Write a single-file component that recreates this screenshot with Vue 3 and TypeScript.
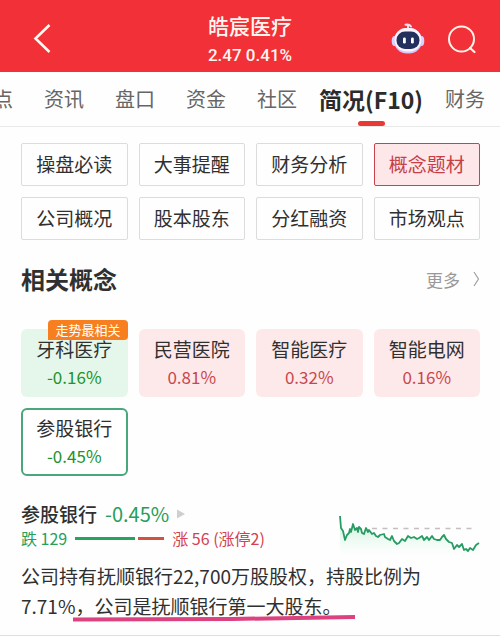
<script setup lang="ts">
import { ref } from 'vue'

interface Concept {
  name: string
  change: string
  tag?: string
}

const tabs: string[] = ['热点', '资讯', '盘口', '资金', '社区', '简况(F10)', '财务']
const activeTab = ref('简况(F10)')

const sections: string[] = [
  '操盘必读', '大事提醒', '财务分析', '概念题材',
  '公司概况', '股本股东', '分红融资', '市场观点',
]
const activeSection = ref('概念题材')

const concepts: Concept[] = [
  { name: '牙科医疗', change: '-0.16%', tag: '走势最相关' },
  { name: '民营医院', change: '0.81%' },
  { name: '智能医疗', change: '0.32%' },
  { name: '智能电网', change: '0.16%' },
  { name: '参股银行', change: '-0.45%' },
]
const activeConcept = ref('参股银行')

const trend =
  '1,2 2,14 4,17 6,26 8,21 10,19 11,15 12,18 14,10 16,16 18,14 19,18 20,13 22,15 23,19 25,20 27,14 29,18 30,16 33,20 35,19 37,22 39,23 41,21 45,20 46,23 49,25 51,26 53,22 55,27 58,30 60,29 63,25 66,27 69,22 72,24 75,23 78,25 80,24 83,22 85,26 88,23 90,26 93,22 95,25 98,26 101,26 103,23 105,21 107,25 110,28 113,29 115,35 118,31 120,33 123,30 125,36 127,35 129,37 131,34 134,36 137,31 140,29'
</script>

<template>
  <div class="page">
    <header class="header">
      <button class="icon-button" type="button" aria-label="返回">
        <svg width="44" height="44" viewBox="0 0 44 44" aria-hidden="true">
          <path d="M28.500 11 L14.500 24.500 L28.500 38" fill="none" stroke="#fff6ee" stroke-width="2.600" />
        </svg>
      </button>
      <div class="stock">
        <h1 class="stock-name">皓宸医疗</h1>
        <p class="stock-quote">2.47 0.41%</p>
      </div>
      <div class="actions">
        <button class="icon-button" type="button" aria-label="智能助手">
          <svg width="34" height="34" viewBox="0 0 34 34" aria-hidden="true">
            <path d="M17 7 V4 M14.500 2.800 Q18.500 1.500 20 4.500" fill="none" stroke="#f3dcec" stroke-width="2" stroke-linecap="round" />
            <ellipse cx="3.500" cy="19" rx="2.800" ry="5" fill="#d9d2ff" />
            <ellipse cx="30.500" cy="19" rx="2.800" ry="5" fill="#d9d2ff" />
            <rect x="3" y="6" width="28" height="25.500" rx="12.700" fill="#d4c5fb" />
            <rect x="3.500" y="6" width="27" height="23.500" rx="11.700" fill="#fbf4fd" />
            <rect x="5.500" y="9.500" width="23" height="17.500" rx="8.500" fill="#232f5c" />
            <rect x="12" y="15.500" width="2.800" height="6" rx="1.300" fill="#ffffff" />
            <rect x="20" y="15.500" width="2.800" height="6" rx="1.300" fill="#ffffff" />
          </svg>
        </button>
        <button class="icon-button" type="button" aria-label="搜索">
          <svg width="34" height="34" viewBox="0 0 34 34" aria-hidden="true">
            <circle cx="16.500" cy="17" r="12.500" fill="none" stroke="#fff3ea" stroke-width="2" />
            <path d="M25 26 L29.500 30" stroke="#fff3ea" stroke-width="2.200" stroke-linecap="round" />
          </svg>
        </button>
      </div>
    </header>

    <nav class="tabs">
      <a
        v-for="tab in tabs"
        :key="tab"
        href="#"
        class="tab"
        :class="{ active: tab === activeTab }"
        @click.prevent="activeTab = tab"
      >{{ tab }}</a>
    </nav>

    <main class="content">
      <div class="grid">
        <button
          v-for="section in sections"
          :key="section"
          type="button"
          class="section"
          :class="{ active: section === activeSection }"
          @click="activeSection = section"
        >{{ section }}</button>
      </div>

      <div class="heading">
        <h2 class="heading-title">相关概念</h2>
        <a class="more" href="#">
          更多
          <svg width="8" height="18" viewBox="0 0 8 18" aria-hidden="true">
            <path d="M2 2 L6.500 9 L2 16" fill="none" stroke="#a0a0a0" stroke-width="1.200" />
          </svg>
        </a>
      </div>

      <div class="grid">
        <button
          v-for="concept in concepts"
          :key="concept.name"
          type="button"
          class="concept"
          :class="{ down: concept.change.startsWith('-'), active: concept.name === activeConcept }"
          @click="activeConcept = concept.name"
        >
          <span v-if="concept.tag" class="tag">{{ concept.tag }}</span>
          <span class="concept-name">{{ concept.name }}</span>
          <span class="concept-change">{{ concept.change }}</span>
        </button>
      </div>

      <section class="detail">
        <div class="detail-head">
          <div class="detail-info">
            <div class="detail-title">
              <h3 class="detail-name">参股银行</h3>
              <span class="detail-change">-0.45%</span>
              <svg width="8" height="10" viewBox="0 0 8 10" aria-hidden="true">
                <path d="M0 0.500 L8 5 L0 9.500 Z" fill="#cfcfcf" />
              </svg>
            </div>
            <div class="breadth">
              <span class="fall">跌 129</span>
              <span class="ratio">
                <span class="ratio-fall"></span>
                <span class="ratio-rise"></span>
              </span>
              <span class="rise">涨 56 (涨停2)</span>
            </div>
          </div>
          <svg class="trend" width="141" height="42" viewBox="0 0 141 42" aria-hidden="true">
            <defs>
              <linearGradient id="trend-fill" x1="0" y1="0" x2="0" y2="1">
                <stop offset="0" stop-color="#a9e8c5" stop-opacity="0.800" />
                <stop offset="1" stop-color="#e0f8ea" stop-opacity="0" />
              </linearGradient>
            </defs>
            <polygon :points="`${trend} 140,42 1,42`" fill="url(#trend-fill)" />
            <path d="M33 14.500 H138" stroke="#c4c0c2" stroke-width="1.500" stroke-dasharray="5 5.500" />
            <polyline :points="trend" fill="none" stroke="#269c62" stroke-width="1.800" stroke-linejoin="round" />
          </svg>
        </div>
        <div class="note">
          <p class="description">公司持有抚顺银行22,700万股股权，持股比例为7.71%，公司是抚顺银行第一大股东。</p>
          <svg class="marker" width="284" height="8" viewBox="0 0 284 8" aria-hidden="true">
            <path d="M1 5.500 L160 5 L283 3" fill="none" stroke="#dc4180" stroke-width="4" />
          </svg>
        </div>
      </section>
    </main>
  </div>
</template>

<style>
body {
  margin: 0;
  background: #fefefe;
}
</style>

<style scoped>
.page {
  font-family: "Noto Sans CJK SC", "Noto Sans", sans-serif;
  color: #303030;
  overflow: hidden;
  border-bottom: 1px solid #dedede;
}

h1,
h2,
h3,
p {
  margin: 0;
}

button {
  font-family: inherit;
  padding: 0;
  border: 0;
  background: none;
}

a {
  color: inherit;
  text-decoration: none;
}

svg {
  display: block;
}

.header {
  display: grid;
  grid-template-columns: 1fr auto 1fr;
  align-items: center;
  height: 72px;
  padding: 0 21px;
  background: #f13037;
  color: #fff6f0;
}

.icon-button {
  justify-self: start;
}

.stock {
  padding-top: 6px;
  text-align: center;
}

.stock-name {
  font-size: 21px;
  line-height: 32px;
  font-weight: 500;
}

.stock-quote {
  font-family: Roboto, sans-serif;
  font-size: 17px;
  line-height: 28px;
  font-weight: 500;
}

.actions {
  display: flex;
  justify-content: flex-end;
  gap: 20px;
  padding-top: 6px;
}

.tabs {
  display: flex;
  justify-content: flex-end;
  align-items: stretch;
  gap: 31px;
  height: 54px;
  padding-right: 15px;
  border-bottom: 1px solid #e9e9e9;
}

.tab {
  flex: none;
  font-size: 20px;
  line-height: 54px;
  color: #666666;
}

.tab.active {
  display: flex;
  flex-direction: column;
  align-items: center;
  margin: 0 -9px;
  font-size: 23px;
  font-weight: 700;
  color: #2b2b2b;
}

.tab.active::after {
  content: "";
  width: 27px;
  height: 6px;
  margin-top: -5px;
  border-radius: 3px;
  background: #e83a35;
}

.content {
  padding: 16px 20px 14px 21px;
}

.grid {
  display: grid;
  grid-template-columns: repeat(4, 1fr);
  gap: 11px;
}

.section {
  height: 43px;
  padding-bottom: 2px;
  border: 1px solid #dcdcdc;
  border-radius: 2px;
  font-size: 19px;
  line-height: 28px;
  color: #303030;
}

.section.active {
  border-color: #c9424c;
  background: #fde7e9;
  color: #c73f46;
}

.heading {
  display: flex;
  justify-content: space-between;
  align-items: center;
  height: 40px;
  margin: 19px 0 30px;
}

.heading-title {
  font-size: 24px;
  line-height: 40px;
  font-weight: 700;
}

.more {
  display: flex;
  align-items: center;
  gap: 12px;
  font-size: 17px;
  color: #999999;
}

.concept {
  position: relative;
  display: flex;
  flex-direction: column;
  align-items: center;
  justify-content: center;
  gap: 8px;
  height: 68px;
  border-radius: 6px;
  background: #fee9ea;
  color: #c9474c;
}

.concept.down {
  background: #e5f6eb;
  color: #219329;
}

.concept.active {
  border: 2px solid #4aa77c;
  background: #ffffff;
}

.concept-name {
  font-size: 19px;
  line-height: 20px;
  color: #303030;
}

.concept-change {
  font-size: 17px;
  line-height: 20px;
}

.tag {
  position: absolute;
  top: -9px;
  right: 0;
  padding: 0 7px;
  border-radius: 4px 4px 4px 0;
  background: #f77f20;
  font-size: 13px;
  line-height: 20px;
  color: #ffffff;
}

.detail {
  padding-top: 24px;
}

.detail-head {
  display: flex;
  justify-content: space-between;
  align-items: flex-end;
}

.detail-title {
  display: flex;
  align-items: center;
  gap: 8px;
}

.detail-name {
  font-size: 19px;
  line-height: 28px;
  font-weight: 500;
}

.detail-change {
  font-size: 20px;
  line-height: 28px;
  color: #24a05a;
}

.breadth {
  display: flex;
  align-items: center;
  gap: 8px;
  font-size: 16px;
  line-height: 20px;
}

.fall {
  color: #24a05a;
}

.rise {
  color: #d3404f;
}

.ratio {
  display: flex;
  gap: 3px;
  width: 89px;
}

.ratio-fall,
.ratio-rise {
  flex: 129;
  height: 3px;
  background: #24a45e;
}

.ratio-rise {
  flex: 56;
  background: #d5513f;
}

.trend {
  margin-bottom: -8px;
}

.note {
  position: relative;
  margin-top: 13px;
}

.description {
  font-size: 19px;
  line-height: 30px;
}

.marker {
  position: absolute;
  left: 51px;
  bottom: -1px;
}
</style>
